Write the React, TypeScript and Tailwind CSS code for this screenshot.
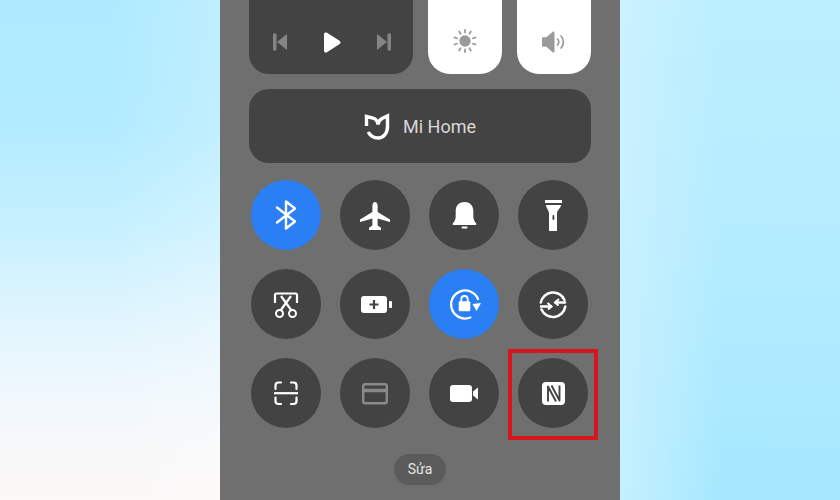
import type { ReactNode } from 'react';

function Round({ bg = 'bg-[#434343]', children }: { bg?: string; children: ReactNode }) {
    return (
        <div className={`w-[70px] h-[70px] rounded-full ${bg}`}>
            <svg width="70" height="70" viewBox="0 0 70 70" className="block">
                {children}
            </svg>
        </div>
    );
}

function MiLogo() {
    return (
        <svg width="26" height="27" viewBox="0 0 26 27" fill="none" stroke="#fff" strokeWidth="3.400">
            <path d="M2.500 13V3.500L9 5.200c3 .8 4.500 2.800 5 6.300.5-3.500 2-5 4.500-6.200L23.500 3v11.500" />
            <path d="M23.500 13.500c0 7-4.300 11.500-9.500 11.500-4.500 0-7.800-2.300-9.800-6" />
        </svg>
    );
}

export default function App() {
    return (
        <div className="w-[840px] h-[500px] flex overflow-hidden font-['Roboto',sans-serif]">
            <div className="w-[220px] h-full bg-[linear-gradient(90deg,rgba(255,255,255,0)_50%,rgba(255,255,255,0.2)_100%),linear-gradient(180deg,#aeeaff_0%,#b2ebff_25%,#c6f0ff_45%,#e2f5fd_65%,#f1f8fd_80%,#f9f8f8_92%,#fbf8f7_100%)]" />

            <div className="relative w-[400px] h-full bg-[#6f6f6f] px-[29px]">
                <div className="h-[74px] flex gap-[15px]">
                    <div className="w-[164px] h-full rounded-b-[20px] bg-[#434343] flex items-end justify-center gap-[36px] pb-[23px] pl-px">
                        <svg width="14" height="18" viewBox="0 0 14 18" fill="#858585">
                            <rect x="0" y="0.500" width="3.500" height="17" rx="0.500" />
                            <path d="M14 1v16L4 9z" />
                        </svg>
                        <svg width="18" height="21" viewBox="0 0 18 21" fill="#fff" className="-mb-[2px]">
                            <path d="M1 2.200C1 .6 2.600 -.1 4 .8l12.600 8c1.200.8 1.200 2.500 0 3.300L4 20.200c-1.400.9-3 .2-3-1.400z" />
                        </svg>
                        <svg width="14" height="18" viewBox="0 0 14 18" fill="#858585">
                            <rect x="10.500" y="0.500" width="3.500" height="17" rx="0.500" />
                            <path d="M0 1v16L10 9z" />
                        </svg>
                    </div>
                    <div className="w-[74px] h-full rounded-b-[22px] bg-white flex items-end justify-center pb-[21px]">
                        <svg width="24" height="24" viewBox="0 0 24 24" stroke="#9a9a9a" strokeWidth="1.800" strokeLinecap="round" fill="#9a9a9a">
                            <circle cx="12" cy="12" r="5.700" stroke="none" />
                            <path d="M12 1v2.600M12 20.400V23M1.500 8.500l2.500.9M20 14.600l2.500.9M1.500 15.500l2.500-.9M20 9.400l2.500-.9M6.200 2.500l1.300 2.300M16.500 19.200l1.300 2.300M6.200 21.500l1.300-2.300M16.500 4.800l1.300-2.300" />
                        </svg>
                    </div>
                    <div className="w-[74px] h-full rounded-b-[22px] bg-white flex items-end justify-center pb-[21px]">
                        <svg width="24" height="22" viewBox="0 0 24 22" fill="none" stroke="#9a9a9a">
                            <path d="M0 7.500c0-.8.5-1.300 1.300-1.300h3L11 .6c.7-.5 1.500 0 1.500.8v19.200c0 .8-.8 1.300-1.500.8l-6.700-5.600h-3C.5 15.800 0 15.300 0 14.500z" fill="#9a9a9a" stroke="none" />
                            <path d="M15.500 8c1.700 1.700 1.700 4.300 0 6" strokeWidth="1.700" strokeLinecap="round" />
                            <path d="M19 5c3.200 3.200 3.200 8.800 0 12" strokeWidth="1.700" strokeLinecap="round" />
                        </svg>
                    </div>
                </div>

                <div className="mt-[15px] h-[74px] rounded-[20px] bg-[#434343] flex items-center justify-center gap-[13px]">
                    <MiLogo />
                    <span className="text-[18px] leading-none text-[#d9d9d9] pt-px">Mi Home</span>
                </div>

                <div className="mt-[17px] grid grid-cols-[repeat(4,70px)] gap-[19px] px-[2px]">
                    <Round bg="bg-[#2a7ff5]">
                        <path d="M26 27.500L44 41.500 35 48.500V21.500L44 28.500 26 42.500" fill="none" stroke="#fff" strokeWidth="2.400" strokeLinejoin="round" strokeLinecap="round" />
                    </Round>
                    <Round>
                        <path d="M35 22c1.600 0 2.600 2 2.600 4v6L50 39.500V42l-12.400-3.500v7l3.400 2.300V50H29v-2.200l3.400-2.300v-7L20 42v-2.500L32.400 32v-6c0-2 1-4 2.600-4z" fill="#fff" />
                    </Round>
                    <Round>
                        <path d="M35.500 22c-6 0-8.800 4-8.800 9v5.500c0 3-1.200 5-2.900 6.800V45h23.400v-1.700c-1.700-1.800-2.900-3.800-2.900-6.800V31c0-5-2.800-9-8.800-9z" fill="#fff" />
                        <rect x="32.500" y="46.500" width="6" height="2" rx="1" fill="#fff" />
                    </Round>
                    <Round>
                        <rect x="27" y="20" width="17" height="3" fill="#fff" />
                        <path d="M28 25h15c0 3-3.500 4.500-4 8v18h-8V33c-.5-3.500-3-5-3-8z" fill="#fff" />
                        <rect x="34.500" y="35" width="1.800" height="5" rx="0.900" fill="#434343" />
                    </Round>

                    <Round>
                        <path d="M24 34V26c0-.8.7-1.500 1.500-1.500h19c.8 0 1.500.7 1.500 1.500v8" fill="none" stroke="#fff" strokeWidth="2.200" />
                        <path d="M30 27l10.500 14.500M40 27L29.500 41.500" fill="none" stroke="#fff" strokeWidth="2.200" />
                        <circle cx="28.500" cy="44.500" r="3.500" fill="none" stroke="#fff" strokeWidth="2" />
                        <circle cx="41.500" cy="44.500" r="3.500" fill="none" stroke="#fff" strokeWidth="2" />
                    </Round>
                    <Round>
                        <rect x="21" y="27" width="26" height="17" rx="3" fill="#fff" />
                        <rect x="49" y="32" width="3" height="7" rx="1" fill="#fff" />
                        <path d="M34 31v9M29.500 35.500h9" stroke="#434343" strokeWidth="2.200" />
                    </Round>
                    <Round bg="bg-[#2a7ff5]">
                        <path d="M49 30A14 14 0 1 0 41.300 48.500" fill="none" stroke="#fff" strokeWidth="2.300" strokeLinecap="round" />
                        <path d="M43.500 35l8.500-1-4.500 8z" fill="#fff" />
                        <rect x="29.700" y="32.300" width="11.600" height="10" rx="1.300" fill="#fff" />
                        <path d="M32.300 33v-2.800a3.200 3.200 0 0 1 6.400 0V33" fill="none" stroke="#fff" strokeWidth="1.800" />
                    </Round>
                    <Round>
                        <path d="M22.800 33.500A12.500 12.500 0 0 1 46.500 31M47 33.500H37.500" fill="none" stroke="#fff" strokeWidth="2.500" strokeLinecap="round" />
                        <path d="M41 30l-4 3.500 3.500 3" fill="none" stroke="#fff" strokeWidth="2" />
                        <path d="M23 37.500H33M23.500 40.500A12.500 12.500 0 0 0 47.300 37.500" fill="none" stroke="#fff" strokeWidth="2.500" strokeLinecap="round" />
                        <path d="M29.500 34l4 3.500-3.500 3" fill="none" stroke="#fff" strokeWidth="2" />
                    </Round>

                    <Round>
                        <path d="M24.500 31v-3.500a3 3 0 0 1 3-3H30M40 24.500h2.500a3 3 0 0 1 3 3V31M24.500 39.500v3.500a3 3 0 0 0 3 3H30M40 46h2.500a3 3 0 0 0 3-3v-3.500" fill="none" stroke="#fff" strokeWidth="2.200" strokeLinecap="round" />
                        <path d="M23 35.200h24" stroke="#fff" strokeWidth="2.200" />
                    </Round>
                    <Round>
                        <rect x="23.200" y="26.200" width="23.600" height="19" rx="2" fill="none" stroke="#8a8a8a" strokeWidth="2.400" />
                        <path d="M23 32.500h24" stroke="#8a8a8a" strokeWidth="3.500" />
                    </Round>
                    <Round>
                        <rect x="21" y="27" width="22" height="17" rx="3" fill="#fff" />
                        <path d="M44 33.500l5-4v12l-5-4z" fill="#fff" />
                    </Round>
                    <Round>
                        <rect x="24" y="24" width="23" height="23" rx="4" fill="#fff" />
                        <path d="M30 43.500V28.500L38 43.500" fill="none" stroke="#434343" strokeWidth="1.900" strokeLinejoin="round" />
                        <path d="M41.500 27.500V42.500L33.500 27.500" fill="none" stroke="#434343" strokeWidth="1.900" strokeLinejoin="round" />
                    </Round>
                </div>

                <div className="mt-[26px] mx-auto w-[52px] h-[31px] rounded-full bg-[#5b5b5b] flex items-center justify-center text-[14px] text-[#e4e4e4]">
                    Sửa
                </div>

                <div className="absolute left-[288px] top-[349px] w-[90px] h-[91px] border-[4px] border-[#d8151d]" />
            </div>

            <div className="w-[220px] h-full bg-[linear-gradient(90deg,rgba(208,242,255,0.75)_0%,rgba(212,243,255,0)_45%),linear-gradient(180deg,#bcefff_0%,#b4ecff_50%,#a6e8ff_100%)]" />
        </div>
    );
}
